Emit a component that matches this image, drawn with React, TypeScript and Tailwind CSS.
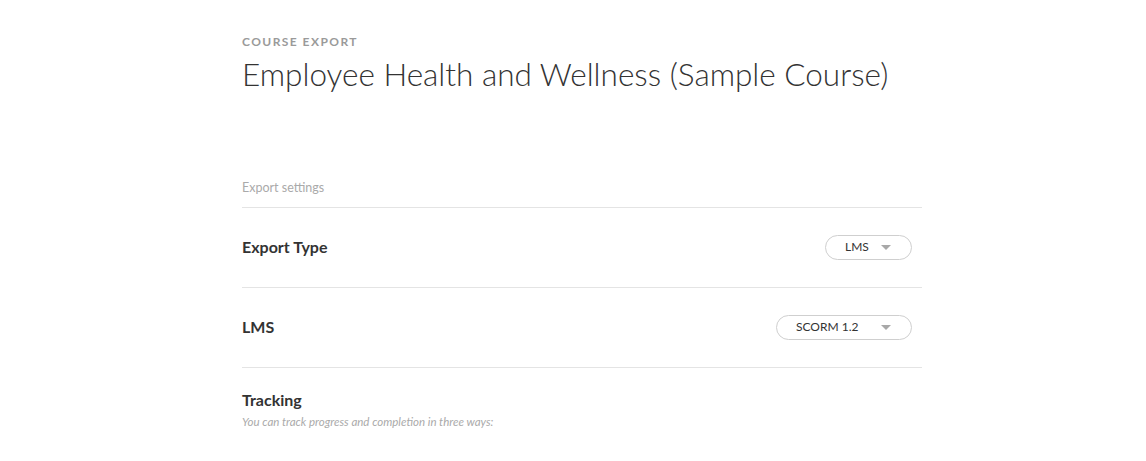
import * as React from "react";

function Caret() {
  return (
    <svg width="10" height="5" viewBox="0 0 10 5" className="shrink-0">
      <path d="M0 0 L10 0 L5 5 Z" fill="#a8a8a8" />
    </svg>
  );
}

function Select({ value, width }: { value: string; width: string }) {
  return (
    <button
      type="button"
      className={`flex h-[25px] ${width} items-center justify-between rounded-full border border-[#cfcfcf] bg-white pl-[19px] pr-[20px] text-[12px] text-[#333]`}
    >
      <span className="text-left">{value}</span>
      <Caret />
    </button>
  );
}

function Row({ label, children }: { label: string; children: React.ReactNode }) {
  return (
    <div className="flex h-[80px] items-center justify-between border-b border-[#e4e4e4] pr-[10px]">
      <span className="text-[16px] font-bold text-[#333]">{label}</span>
      {children}
    </div>
  );
}

export default function App() {
  return (
    <div className="min-h-[461px] bg-white font-['Lato','Noto_Sans',sans-serif] text-[#333]">
      <div className="ml-[242px] w-[680px] pt-[33px]">
        <div className="text-[12px] font-bold uppercase tracking-[0.12em] text-[#9a9a9a]">Course Export</div>
        <h1 className="mt-[3px] text-[31.5px] font-light leading-[40px] text-[#333]">
          Employee Health and Wellness (Sample Course)
        </h1>

        <div className="mt-[85px] border-b border-[#e4e4e4] pb-[9px] text-[12.5px] text-[#aaa]">Export settings</div>

        <Row label="Export Type">
          <Select value="LMS" width="w-[87px]" />
        </Row>
        <Row label="LMS">
          <Select value="SCORM 1.2" width="w-[136px]" />
        </Row>

        <div className="pt-[21px]">
          <div className="text-[16px] font-bold leading-[22px] text-[#333]">Tracking</div>
          <div className="mt-[2px] text-[11.5px] italic text-[#aaa]">You can track progress and completion in three ways:</div>
        </div>
      </div>
    </div>
  );
}
